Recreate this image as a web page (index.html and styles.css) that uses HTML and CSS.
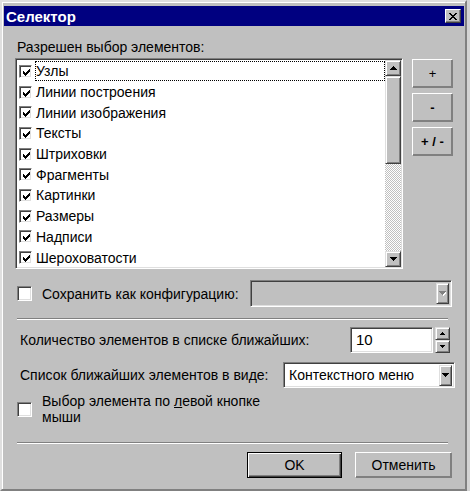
FILE: index.html
```html
<!DOCTYPE html>
<html>
<head>
    <title>Селектор</title>
    <link rel="stylesheet" href="styles.css">
</head>
<body>
    <div class="window">
        <div class="titlebar">
            <span class="title">Селектор</span>
            <span class="close-btn">
                <svg width="8" height="7" viewBox="0 0 8 7"><path d="M0 0h2v1h1v1h2V1h1V0h2v1H7v1H6v1H5v1h1v1h1v1h1v1H6V6H5V5H3v1H2v1H0V6h1V5h1V4h1V3H2V2H1V1H0z" fill="#000"/></svg>
            </span>
        </div>
        <div class="content">
            <div class="caption">Разрешен выбор элементов:</div>
            <div class="list-row">
                <div class="listbox">
                    <div class="items">
                        <div class="item"><span class="check"></span><span class="item-text focus">Узлы</span></div>
                        <div class="item"><span class="check"></span><span class="item-text">Линии построения</span></div>
                        <div class="item"><span class="check"></span><span class="item-text">Линии изображения</span></div>
                        <div class="item"><span class="check"></span><span class="item-text">Тексты</span></div>
                        <div class="item"><span class="check"></span><span class="item-text">Штриховки</span></div>
                        <div class="item"><span class="check"></span><span class="item-text">Фрагменты</span></div>
                        <div class="item"><span class="check"></span><span class="item-text">Картинки</span></div>
                        <div class="item"><span class="check"></span><span class="item-text">Размеры</span></div>
                        <div class="item"><span class="check"></span><span class="item-text">Надписи</span></div>
                        <div class="item"><span class="check"></span><span class="item-text">Шероховатости</span></div>
                    </div>
                    <div class="vscroll">
                        <div class="sbtn">
                            <svg width="7" height="4" viewBox="0 0 7 4"><path d="M3 0h1v1h1v1h1v1h1v1H0V3h1V2h1V1h1z" fill="#000"/></svg>
                        </div>
                        <div class="thumb"></div>
                        <div class="track"></div>
                        <div class="sbtn">
                            <svg width="7" height="4" viewBox="0 0 7 4"><path d="M0 0h7v1H6v1H5v1H4v1H3V3H2V2H1V1H0z" fill="#000"/></svg>
                        </div>
                    </div>
                </div>
                <div class="side-buttons">
                    <div class="btn side-btn">+</div>
                    <div class="btn side-btn minus">-</div>
                    <div class="btn side-btn pm">+ / -</div>
                </div>
            </div>

            <div class="config-row">
                <span class="cbox"></span>
                <span class="config-label">Сохранить как конфигурацию:</span>
                <div class="combo disabled">
                    <div class="combo-value"></div>
                    <div class="combo-arrow">
                        <svg width="7" height="5" viewBox="0 0 7 5"><path d="M1 1h7v1H7v1H6v1H5v1H4V4H3V3H2V2H1z" fill="#fff"/><path d="M0 0h7v1H6v1H5v1H4v1H3V3H2V2H1V1H0z" fill="#808080"/></svg>
                    </div>
                </div>
            </div>

            <div class="sep"></div>

            <div class="field-row spin-row">
                <span class="field-label">Количество элементов в списке ближайших:</span>
                <div class="edit">10</div>
                <div class="spin">
                    <div class="spin-btn"><svg width="5" height="3" viewBox="0 0 5 3"><path d="M2 0h1v1h1v1h1v1H0V2h1V1h1z" fill="#000"/></svg></div>
                    <div class="spin-btn"><svg width="5" height="3" viewBox="0 0 5 3"><path d="M0 0h5v1H4v1H3v1H2V2H1V1H0z" fill="#000"/></svg></div>
                </div>
            </div>

            <div class="field-row combo-row">
                <span class="field-label">Список ближайших элементов в виде:</span>
                <div class="combo view-combo">
                    <div class="combo-value">Контекстного меню</div>
                    <div class="combo-arrow">
                        <svg width="7" height="4" viewBox="0 0 7 4"><path d="M0 0h7v1H6v1H5v1H4v1H3V3H2V2H1V1H0z" fill="#000"/></svg>
                    </div>
                </div>
            </div>

            <div class="mouse-row">
                <span class="cbox"></span>
                <span class="mouse-label">Выбор элемента по <u>л</u>евой кнопке<br>мыши</span>
            </div>

            <div class="sep bottom-sep"></div>

            <div class="dialog-buttons">
                <div class="btn ok-btn">OK</div>
                <div class="btn cancel-btn">Отменить</div>
            </div>
        </div>
    </div>
</body>
</html>
```

FILE: styles.css
```css
body {
    margin: 0;
    background-color: #d4d4d4;
    font-family: "Liberation Sans", Arial, sans-serif;
    font-size: 14px;
    color: #000;
}

.window {
    width: 467px;
    height: 491px;
    box-sizing: border-box;
    background-color: #c0c0c0;
    border-top: 2px solid #dfdfdf;
    border-left: 2px solid #dfdfdf;
    border-right: 2px solid #808080;
    border-bottom: 2px solid #808080;
    box-shadow: inset 1px 1px #fff;
}

.titlebar {
    height: 20px;
    margin: 4px 1px 0 2px;
    background-color: #000080;
    display: flex;
    align-items: center;
    justify-content: space-between;
}

.title {
    color: #fff;
    font-weight: bold;
    font-size: 15px;
    padding-left: 2px;
}

.close-btn {
    width: 16px;
    height: 14px;
    margin-right: 3px;
    box-sizing: border-box;
    background-color: #c0c0c0;
    border-top: 1px solid #fff;
    border-left: 1px solid #fff;
    border-right: 1px solid #404040;
    border-bottom: 1px solid #404040;
    box-shadow: inset -1px -1px #808080;
    display: flex;
    align-items: center;
    justify-content: center;
}

.content {
    padding-left: 13px;
    width: 440px;
}

.caption {
    margin-top: 13px;
    padding-left: 2px;
    line-height: 16px;
}

/* list with checkboxes */
.list-row {
    display: flex;
    align-items: flex-start;
    margin-top: 3px;
}

.listbox {
    width: 388px;
    height: 211px;
    box-sizing: border-box;
    display: flex;
    border-top: 1px solid #808080;
    border-left: 1px solid #808080;
    border-right: 1px solid #fff;
    border-bottom: 1px solid #fff;
    box-shadow: inset 1px 1px #404040, inset -1px -1px #dfdfdf;
    padding: 1px;
}

.items {
    flex: 1;
    background-color: #fff;
    overflow: hidden;
}

.item {
    height: 20.7px;
    display: flex;
    align-items: center;
    padding-left: 2px;
}

.item:first-child {
    margin-top: 1px;
}

.check,
.cbox {
    width: 13px;
    height: 13px;
    box-sizing: border-box;
    background-color: #fff;
    border-top: 1px solid #808080;
    border-left: 1px solid #808080;
    border-right: 1px solid #fff;
    border-bottom: 1px solid #fff;
    box-shadow: inset 1px 1px #404040, inset -1px -1px #dfdfdf;
    flex-shrink: 0;
}

.check {
    background: #fff url("data:image/svg+xml,%3Csvg xmlns='http://www.w3.org/2000/svg' width='7' height='7' viewBox='0 0 7 7'%3E%3Cpath d='M6 0h1v3H6v1H5v1H4v1H3v1H2V6H1V5H0V2h1v1h1v1h1V3h1V2h1V1h1z' fill='%23000'/%3E%3C/svg%3E") no-repeat 3px 3px;
}

.item-text {
    margin-left: 3px;
    flex: 1;
    height: 20px;
    line-height: 20px;
    box-sizing: border-box;
    padding-left: 1px;
}

.item-text.focus {
    outline: 1px dotted #000;
    outline-offset: -1px;
}

.vscroll {
    width: 16px;
    display: flex;
    flex-direction: column;
}

.sbtn,
.thumb,
.btn,
.combo-arrow,
.spin-btn {
    box-sizing: border-box;
    background-color: #c0c0c0;
    border-top: 1px solid #dfdfdf;
    border-left: 1px solid #dfdfdf;
    border-right: 1px solid #404040;
    border-bottom: 1px solid #404040;
    box-shadow: inset 1px 1px #fff, inset -1px -1px #808080;
}

.sbtn {
    height: 16px;
    display: flex;
    align-items: center;
    justify-content: center;
}

.thumb {
    height: 88px;
}

.track {
    flex: 1;
    background: repeating-conic-gradient(#c0c0c0 0 25%, #fff 0 50%) 0 0 / 2px 2px;
}

.side-buttons {
    display: flex;
    flex-direction: column;
    gap: 5px;
    margin-left: 9px;
    margin-top: 1px;
}

.btn {
    display: flex;
    align-items: center;
    justify-content: center;
    border-top: 1px solid #fff;
    border-left: 1px solid #fff;
    border-right: 1px solid #808080;
    border-bottom: 1px solid #808080;
    box-shadow: inset -1px -1px #808080;
}

.side-btn {
    width: 41px;
    height: 29px;
    font-size: 13px;
}

.side-btn.minus,
.side-btn.pm {
    font-weight: bold;
}

/* configuration row */
.config-row {
    display: flex;
    align-items: center;
    margin-top: 11px;
    height: 27px;
}

.config-row .cbox,
.mouse-row .cbox {
    width: 15px;
    height: 15px;
    margin-left: 2px;
}

.config-label {
    margin-left: 10px;
}

.combo {
    box-sizing: border-box;
    display: flex;
    align-items: center;
    border-top: 1px solid #808080;
    border-left: 1px solid #808080;
    border-right: 1px solid #fff;
    border-bottom: 1px solid #fff;
    box-shadow: inset 1px 1px #404040, inset -1px -1px #dfdfdf;
    padding: 2px;
}

.combo.disabled {
    width: 202px;
    height: 27px;
    margin-left: auto;
    margin-right: 3px;
    background-color: #c0c0c0;
}

.combo-value {
    flex: 1;
    padding-left: 3px;
}

.combo-arrow {
    width: 13px;
    height: 21px;
    display: flex;
    align-items: center;
    justify-content: center;
}

.sep {
    margin: 11px 7px 0 2px;
    border-top: 1px solid #808080;
    border-bottom: 1px solid #fff;
}

.field-row {
    display: flex;
    align-items: center;
    height: 26px;
}

.spin-row {
    margin-top: 7px;
}

.combo-row {
    margin-top: 9px;
}

.field-label {
    padding-left: 5px;
    flex: 1;
}

.edit {
    width: 83px;
    height: 26px;
    box-sizing: border-box;
    background-color: #fff;
    border-top: 1px solid #808080;
    border-left: 1px solid #808080;
    border-right: 1px solid #fff;
    border-bottom: 1px solid #fff;
    box-shadow: inset 1px 1px #404040, inset -1px -1px #dfdfdf;
    padding-left: 5px;
    line-height: 24px;
    font-size: 15px;
}

.spin {
    width: 15px;
    height: 26px;
    margin-left: 2px;
    margin-right: 5px;
    display: flex;
    flex-direction: column;
}

.spin-btn {
    flex: 1;
    display: flex;
    align-items: center;
    justify-content: center;
}

.view-combo {
    width: 172px;
    height: 26px;
    background-color: #fff;
}

.mouse-row {
    display: flex;
    align-items: flex-start;
    margin-top: 5px;
}

.mouse-row .cbox {
    margin-top: 9px;
}

.mouse-label {
    margin-left: 10px;
    line-height: 16px;
}

.bottom-sep {
    margin-top: 17px;
}

.dialog-buttons {
    display: flex;
    justify-content: flex-end;
    gap: 13px;
    margin-top: 8px;
    margin-right: 3px;
}

.ok-btn,
.cancel-btn {
    height: 26px;
}

.ok-btn {
    width: 95px;
    border: 1px solid #000;
    box-shadow: inset 1px 1px #fff, inset -1px -1px #404040, inset -2px -2px #808080;
}

.cancel-btn {
    width: 97px;
}
```
